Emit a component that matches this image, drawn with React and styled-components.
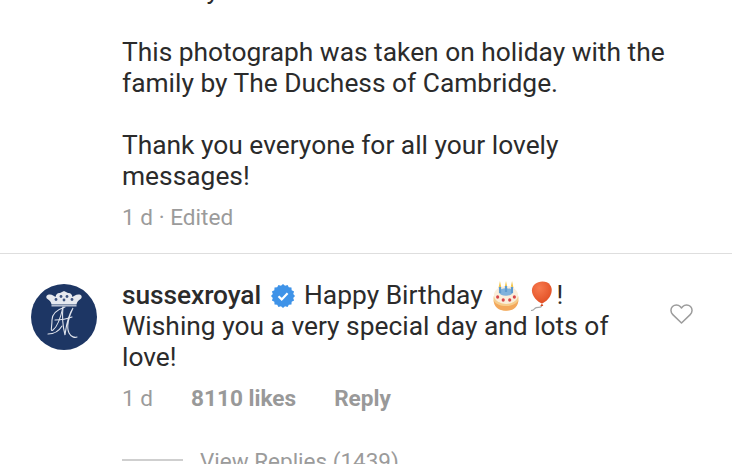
import React from "react";
import styled, { createGlobalStyle } from "styled-components";

const Global = createGlobalStyle`
  html, body { margin: 0; padding: 0; background: #fff; }
  body { font-family: Roboto, "Liberation Sans", sans-serif; }
`;
const Page = styled.div`
  width: 732px; height: 464px; overflow: hidden; background: #fff; color: #2b2b2b;
  font-size: 26.35px; line-height: 31px;
`;
const Caption = styled.section`
  margin-top: -25px; padding: 0 60px 20px 122px;
  border-bottom: 1px solid #dedede;
  height: 279px; box-sizing: border-box;
`;
const Para = styled.p`
  margin: 0 0 31px;
  &:nth-of-type(3) { margin-bottom: 10px; }
`;
const Meta = styled.div`
  display: flex; align-items: center;
  color: #9b9b9b; font-size: 22.6px; line-height: 31px;
`;
const Strong = styled.span`font-weight: 700; color: #999; font-size: 22.6px;`;
const Comment = styled.section`
  display: flex; padding: 26px 0 0 31px;
`;
const Avatar = styled.div`
  width: 66px; height: 66px; flex: none; margin-top: 4px; margin-right: 25px;
  svg { display: block; }
`;
const Body = styled.div`width: 510px;`;
const Line = styled.div`display: flex; align-items: center; height: 31px; white-space: nowrap;`;
const Name = styled.span`font-weight: 500; letter-spacing: -0.09px;`;
const Badge = styled.svg`margin: 0 9px 0 10px; flex: none;`;
const Emoji = styled.svg`flex: none; margin: ${p => p.$margin};`;
const Heart = styled.svg`flex: none; margin: 24px 0 0 38px;`;
const CommentMeta = styled(Meta)`margin-top: 10px; gap: 38px;`;
const Replies = styled.div`
  display: flex; align-items: center; gap: 17px; margin: 34px 0 0 122px;
  color: #9b9b9b; font-size: 22.5px; line-height: 26px; white-space: nowrap;
`;
const Rule = styled.span`width: 61px; height: 1.5px; margin-bottom: 2px; background: #cfcfcf;`;

const badgePath = (() => {
  const pts = [];
  for (let i = 0; i < 32; i++) {
    const r = i % 2 ? 10.4 : 12;
    const a = (i / 32) * Math.PI * 2;
    pts.push(`${(12 + r * Math.cos(a)).toFixed(2)},${(12 + r * Math.sin(a)).toFixed(2)}`);
  }
  return pts.join(" ");
})();

const Monogram = () => (
  <svg width="66" height="66" viewBox="0 0 66 66">
    <circle cx="33" cy="33" r="33" fill="#1d3664" />
    <path d="M18 10.5 C21 10 23 12 24.5 13 C25 10 27 8.5 29 9 L33 7 L37 9 C39 8.5 41 10 41.5 13 C43 12 45 10 48.5 10.5 C51 11 51.5 13.5 49.5 15 C47 16.5 46 18 45.5 20.5 H20.5 C20 18 19 16.5 16.5 15 C14.5 13.5 15 11 18 10.5Z" fill="#e6e9ef" />
    <circle cx="25" cy="15.5" r="1.4" fill="#3d5480" />
    <circle cx="30" cy="12.5" r="1.4" fill="#3d5480" />
    <circle cx="36" cy="12.5" r="1.4" fill="#3d5480" />
    <circle cx="41" cy="15.5" r="1.4" fill="#3d5480" />
    <circle cx="33" cy="16" r="1.4" fill="#3d5480" />
    <path d="M20.5 21.8 H45.5" stroke="#cfd5e2" strokeWidth="1.3" />
    <g fill="none" stroke="#dfe3ec" strokeWidth="1.1" strokeLinecap="round">
      <path d="M34 23 C28 25 21 29 21 36 C21 43 19 48 22 46 C26 43 30 32 32 23" />
      <path d="M32 23 C31 32 32 43 34 51 C35 44 36 33 42 24 C38 32 35 43 38 49 C40 53 44 54 46 53" />
      <path d="M24 36 C30 36 36 35 41 33" />
      <path d="M17 50 C23 50 28 47 31 42" />
    </g>
  </svg>
);

const Cake = () => (
  <Emoji $margin="0 11px 0 10px" width="26" height="30" viewBox="0 0 28 30" preserveAspectRatio="none">
    <path d="M7.5 0 l1.6 7h-3.2zM14 0 l1.6 7h-3.2zM20.5 0 l1.6 7h-3.2z" fill="#f3c64e" />
    <ellipse cx="14" cy="18" rx="13.5" ry="11.5" fill="#f6cd8c" />
    <path d="M.6 19 C4 27 24 27 27.4 19 C27 26 22 29.8 14 29.8 C6 29.8 1 26 .6 19Z" fill="#f3a85c" />
    <ellipse cx="14" cy="14" rx="13" ry="9" fill="#faeedb" />
    <ellipse cx="14" cy="11" rx="7.5" ry="3.8" fill="#7fb2dc" />
    <circle cx="5" cy="16" r="1.7" fill="#d8474a" />
    <circle cx="11" cy="19" r="1.7" fill="#d8474a" />
    <circle cx="18" cy="19" r="1.7" fill="#d8474a" />
    <circle cx="23" cy="16" r="1.7" fill="#d8474a" />
    <rect x="6.4" y="6" width="2.4" height="6" fill="#5e9bd0" />
    <rect x="12.8" y="5" width="2.4" height="6" fill="#5e9bd0" />
    <rect x="19.2" y="6" width="2.4" height="6" fill="#5e9bd0" />
  </Emoji>
);

const Balloon = () => (
  <Emoji $margin="0 4px 0 0" width="23" height="30" viewBox="0 0 24 30" preserveAspectRatio="none">
    <defs>
      <radialGradient id="bal" cx="0.38" cy="0.3" r="0.8">
        <stop offset="0" stopColor="#f77a4e" />
        <stop offset="1" stopColor="#df4a20" />
      </radialGradient>
    </defs>
    <path d="M13 0.5 C20 0.5 23.5 5.5 22.5 11 C21.5 16.5 16.5 21 12.5 22.5 C8 21 2 15.5 2 9.5 C2 4 7 .5 13 .5Z" fill="url(#bal)" />
    <path d="M12.5 22.5 l-1.8 2.4 h3.2z" fill="#d4481f" />
    <path d="M12 25 C12 27.5 7 25.5 5 27.5 C4 29 2.5 29.5 1 29.5" fill="none" stroke="#a8a8a8" strokeWidth="1.2" />
  </Emoji>
);

export default function App() {
  return (
    <Page>
      <Global />
      <Caption>
        <Para>Birthday</Para>
        <Para>This photograph was taken on holiday with the family by The Duchess of Cambridge.</Para>
        <Para>Thank you everyone for all your lovely messages!</Para>
        <Meta>1 d · Edited</Meta>
      </Caption>
      <Comment>
        <Avatar><Monogram /></Avatar>
        <Body>
          <Line>
            <Name>sussexroyal</Name>
            <Badge width="24" height="24" viewBox="0 0 24 24">
              <polygon points={badgePath} fill="#3f93e8" />
              <path d="M7.5 12.3 L10.7 15.4 L16.6 9.3" fill="none" stroke="#fff" strokeWidth="2.2" />
            </Badge>
            <span>Happy Birthday</span>
            <Cake />
            <Balloon />
            <span>!</span>
          </Line>
          <Line>Wishing you a very special day and lots of</Line>
          <Line>love!</Line>
          <CommentMeta>
            <span>1 d</span>
            <Strong>8110 likes</Strong>
            <Strong>Reply</Strong>
          </CommentMeta>
        </Body>
        <Heart width="23" height="20" viewBox="0 0 23 20">
          <path d="M11.5 19 L2.8 10.6 C.4 8.3 .4 4.6 2.5 2.5 C4.7 .4 8.2 .4 10.2 2.5 L11.5 3.9 L12.8 2.5 C14.8 .4 18.3 .4 20.5 2.5 C22.6 4.6 22.6 8.3 20.2 10.6 Z" fill="none" stroke="#9c9c9c" strokeWidth="1.5" strokeLinejoin="round" />
        </Heart>
      </Comment>
      <Replies>
        <Rule />
        <span>View Replies (1439)</span>
      </Replies>
    </Page>
  );
}
